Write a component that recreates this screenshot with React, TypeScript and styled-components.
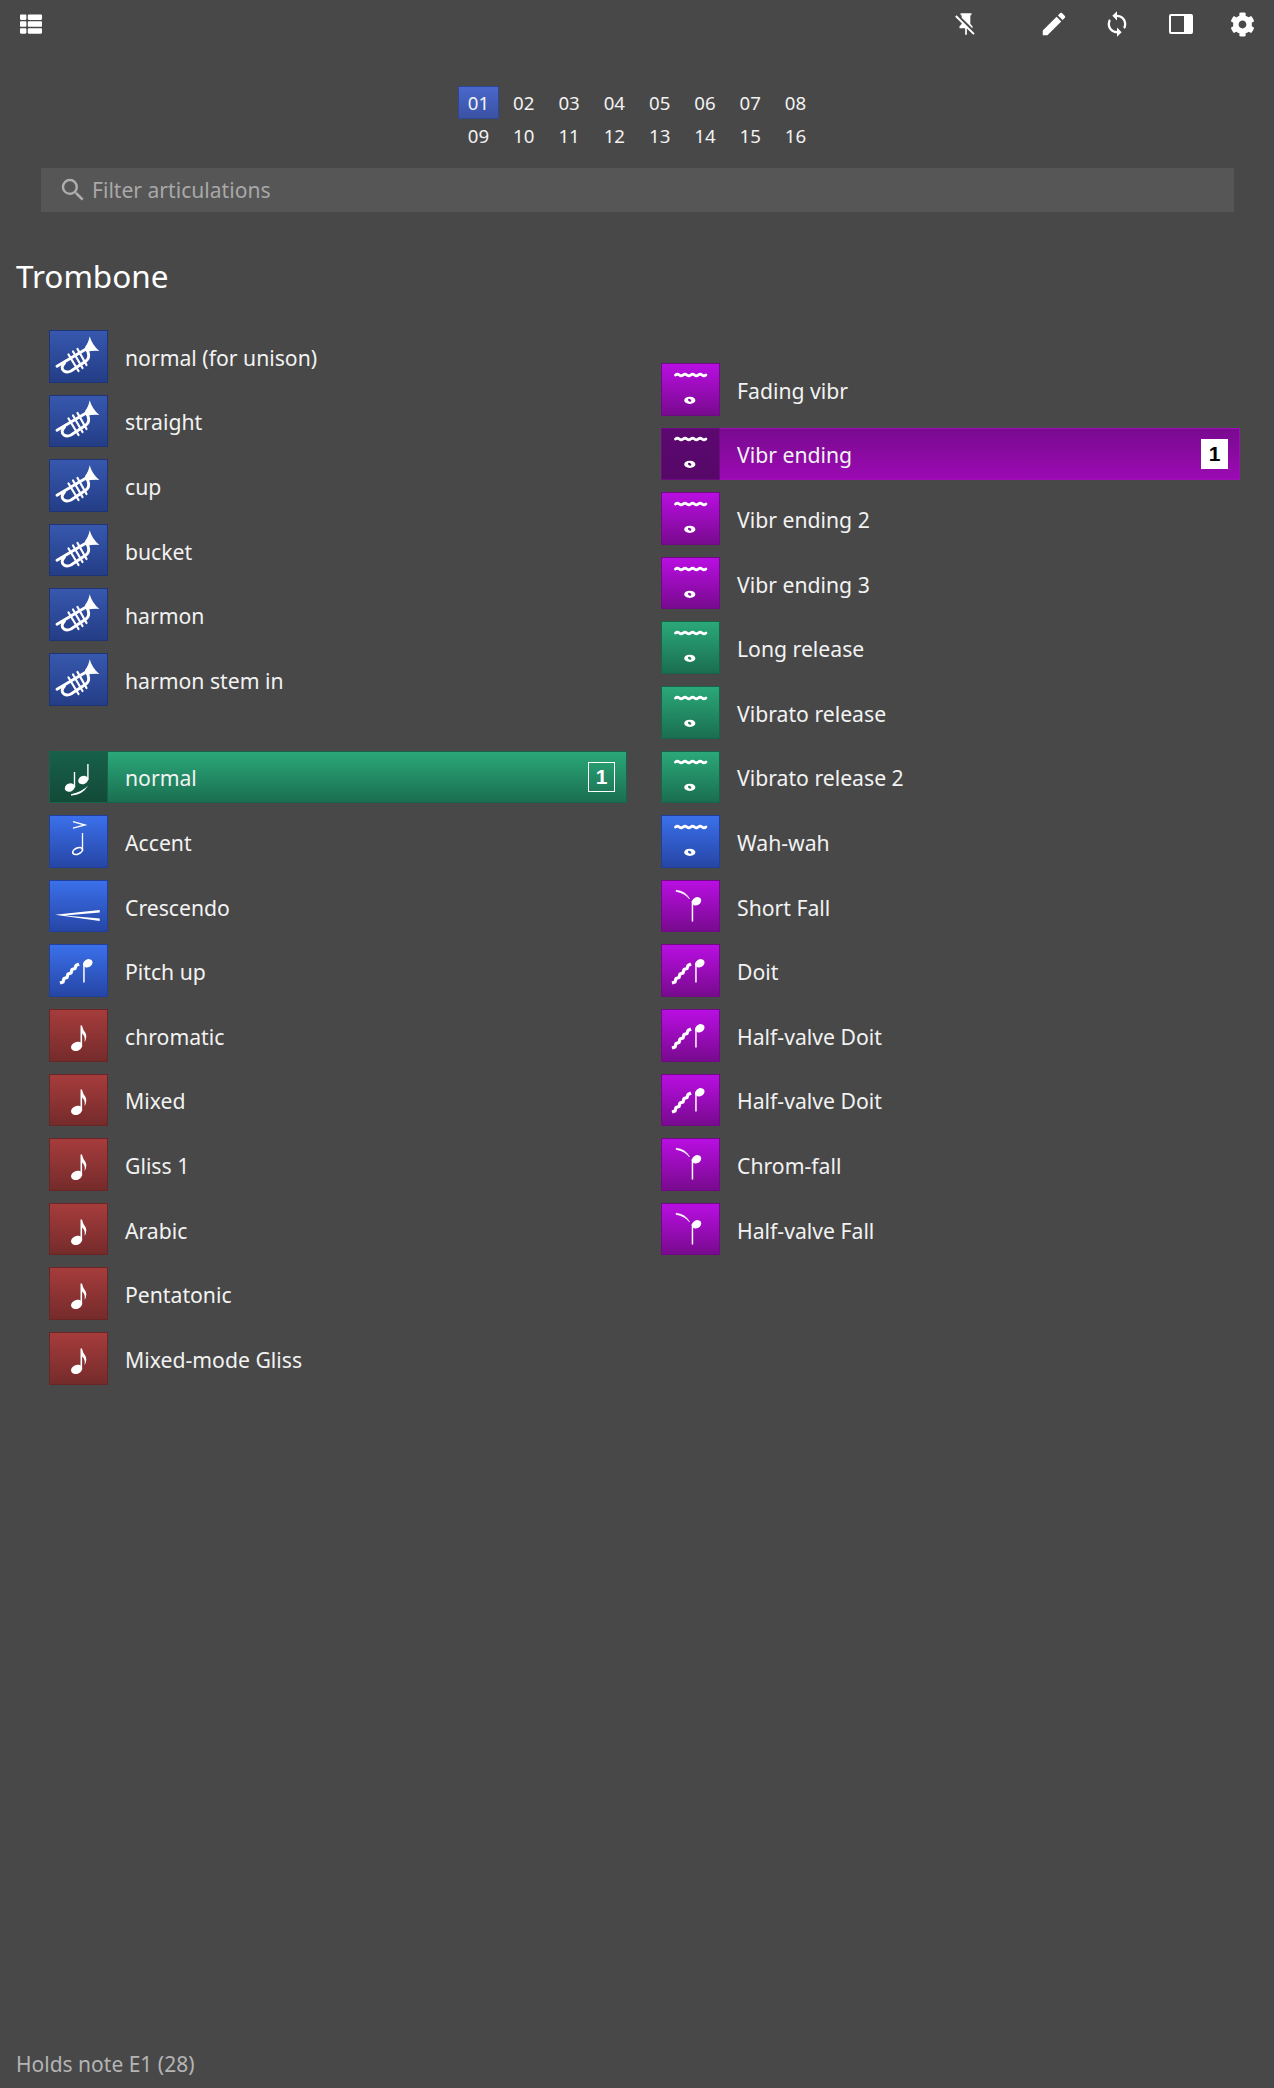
import styled, { createGlobalStyle } from 'styled-components';
import { FaCog, FaThList } from 'react-icons/fa';
import { MdEdit, MdSearch, MdSync } from 'react-icons/md';

type Tone = 'navy' | 'blue' | 'red' | 'purple' | 'green';
type Glyph = 'trumpet' | 'slur' | 'accent' | 'cresc' | 'doit' | 'eighth' | 'vibrato' | 'fall';

interface Articulation {
  label: string;
  tone: Tone;
  glyph: Glyph;
  slot?: 'outline' | 'solid';
}

const tones: Record<Tone, { top: string; bottom: string; border: string; dark: string; darkEnd: string }> = {
  navy: { top: '#3758ae', bottom: '#243d86', border: '#1f3474', dark: '#1f3474', darkEnd: '#1a2c60' },
  blue: { top: '#3b70ea', bottom: '#2646a6', border: '#21409c', dark: '#1f3c90', darkEnd: '#1a3278' },
  red: { top: '#a63c3c', bottom: '#752b2b', border: '#682626', dark: '#682626', darkEnd: '#522020' },
  purple: { top: '#b90ee2', bottom: '#780a8e', border: '#6e0a84', dark: '#5c0870', darkEnd: '#560868' },
  green: { top: '#2ba87a', bottom: '#1a6e50', border: '#186448', dark: '#17604a', darkEnd: '#134a38' },
};

const firstGroup: Articulation[] = [
  { label: 'normal (for unison)', tone: 'navy', glyph: 'trumpet' },
  { label: 'straight', tone: 'navy', glyph: 'trumpet' },
  { label: 'cup', tone: 'navy', glyph: 'trumpet' },
  { label: 'bucket', tone: 'navy', glyph: 'trumpet' },
  { label: 'harmon', tone: 'navy', glyph: 'trumpet' },
  { label: 'harmon stem in', tone: 'navy', glyph: 'trumpet' },
];

const secondGroup: Articulation[] = [
  { label: 'normal', tone: 'green', glyph: 'slur', slot: 'outline' },
  { label: 'Accent', tone: 'blue', glyph: 'accent' },
  { label: 'Crescendo', tone: 'blue', glyph: 'cresc' },
  { label: 'Pitch up', tone: 'blue', glyph: 'doit' },
  { label: 'chromatic', tone: 'red', glyph: 'eighth' },
  { label: 'Mixed', tone: 'red', glyph: 'eighth' },
  { label: 'Gliss 1', tone: 'red', glyph: 'eighth' },
  { label: 'Arabic', tone: 'red', glyph: 'eighth' },
  { label: 'Pentatonic', tone: 'red', glyph: 'eighth' },
  { label: 'Mixed-mode Gliss', tone: 'red', glyph: 'eighth' },
];

const thirdGroup: Articulation[] = [
  { label: 'Fading vibr', tone: 'purple', glyph: 'vibrato' },
  { label: 'Vibr ending', tone: 'purple', glyph: 'vibrato', slot: 'solid' },
  { label: 'Vibr ending 2', tone: 'purple', glyph: 'vibrato' },
  { label: 'Vibr ending 3', tone: 'purple', glyph: 'vibrato' },
  { label: 'Long release', tone: 'green', glyph: 'vibrato' },
  { label: 'Vibrato release', tone: 'green', glyph: 'vibrato' },
  { label: 'Vibrato release 2', tone: 'green', glyph: 'vibrato' },
  { label: 'Wah-wah', tone: 'blue', glyph: 'vibrato' },
  { label: 'Short Fall', tone: 'purple', glyph: 'fall' },
  { label: 'Doit', tone: 'purple', glyph: 'doit' },
  { label: 'Half-valve Doit', tone: 'purple', glyph: 'doit' },
  { label: 'Half-valve Doit', tone: 'purple', glyph: 'doit' },
  { label: 'Chrom-fall', tone: 'purple', glyph: 'fall' },
  { label: 'Half-valve Fall', tone: 'purple', glyph: 'fall' },
];

const banks = Array.from({ length: 16 }, (_, i) => String(i + 1).padStart(2, '0'));

function GlyphArt({ name }: { name: Glyph }) {
  switch (name) {
    case 'trumpet':
      return (
        <>
          <path d="M40.7 6.3 Q43 15 50.3 20.9 Q43 20.5 37 22 L36 17 Q39.5 13 40.7 6.3 Z" fill="#fff" />
          <g fill="none" stroke="#fff" strokeWidth="2.9" strokeLinecap="round">
            <path d="M8 36.3 L38 18.5" />
            <path d="M15.5 33 Q11 38 15 41 Q18 43 22 41 L37 31 Q41 28 39 22" />
          </g>
          <g fill="none" stroke="#fff" strokeWidth="2.2" strokeLinecap="round">
            <path d="M19.5 24.5 L29.5 41" />
            <path d="M24 21.5 L33.5 38" />
            <path d="M28.5 19 L37.5 35" />
          </g>
        </>
      );
    case 'slur':
      return (
        <g fill="#fff">
          <ellipse cx="20.8" cy="37.5" rx="5.2" ry="4" transform="rotate(-25 20.8 37.5)" />
          <path d="M24.8 22 h1.4 v15.5 h-1.4z" />
          <ellipse cx="34.2" cy="30" rx="5.2" ry="4" transform="rotate(-25 34.2 30)" />
          <path d="M38.2 14 h1.4 v16 h-1.4z" />
          <path d="M22 45.4 Q33 45.7 39.2 35.5 Q33 42 22 44.2z" />
        </g>
      );
    case 'accent':
      return (
        <g fill="none" stroke="#fff" strokeWidth="1.3">
          <path d="M24 6.7 L36 10 L24 13.2" />
          <path d="M33.5 18 V35.5" />
          <ellipse cx="28.6" cy="36" rx="5.2" ry="3" transform="rotate(-25 28.6 36)" strokeWidth="1.7" />
        </g>
      );
    case 'cresc':
      return <path d="M6 34.8 L50.7 30 V32.4 L16 35.6 L50.7 38.6 V41 Z" fill="#fff" />;
    case 'doit':
      return (
        <g>
          <path
            d="M11 39 l3 -1 l1 -3.5 l3 -1 l1 -3.5 l3 -1 l1 -3.5 l3 -1 l1 -3 l3 -1.5"
            fill="none"
            stroke="#fff"
            strokeWidth="3.2"
            strokeLinejoin="round"
          />
          <path d="M34.2 19 h1.5 v19.5 h-1.5z" fill="#fff" />
          <ellipse cx="38.8" cy="19.3" rx="5" ry="3.9" transform="rotate(-30 38.8 19.3)" fill="#fff" />
        </g>
      );
    case 'eighth':
      return (
        <g fill="#fff">
          <ellipse cx="27.6" cy="37.4" rx="5.8" ry="4.4" transform="rotate(-25 27.6 37.4)" />
          <path d="M31.5 16.5 h1.6 v21 h-1.6z" />
          <path d="M33 17 Q34 21 36.5 24 Q38.5 28 35.6 33 Q36.6 27 33 24.5z" />
        </g>
      );
    case 'vibrato':
      return (
        <g fill="#fff">
          <path
            d="M14.5 12 q1.9 -1.6 3.8 0 t3.8 0 t3.8 0 t3.8 0 t3.8 0 t3.8 0 t3.8 0 t3.8 0"
            fill="none"
            stroke="#fff"
            strokeWidth="2.8"
            strokeLinecap="round"
          />
          <path
            fillRule="evenodd"
            d="M28.8 33.7 c3.4 0 5.6 1.5 5.6 3.6 s-2.2 3.6 -5.6 3.6 s-5.6 -1.5 -5.6 -3.6 s2.2 -3.6 5.6 -3.6z M27.4 36 c-.6 .3 -.5 1.2 .2 2 c.7 .8 1.7 1 2.3 .6 c.6 -.4 .5 -1.2 -.2 -2 c-.7 -.7 -1.7 -.9 -2.3 -.6z"
          />
        </g>
      );
    default:
      return (
        <g>
          <path d="M15 10.2 Q24.5 11 28.6 19 Q24 13 15 11.4z" fill="#fff" stroke="#fff" strokeWidth=".5" />
          <path d="M30.7 21 h1.5 v20.5 h-1.5z" fill="#fff" />
          <ellipse cx="35.5" cy="21.3" rx="5" ry="3.9" transform="rotate(-30 35.5 21.3)" fill="#fff" />
        </g>
      );
  }
}

function ArticulationRow({ item }: { item: Articulation }) {
  return (
    <Row $tone={item.tone} $slot={item.slot}>
      <IconBox $tone={item.tone} $active={!!item.slot}>
        <svg width="59" height="53" viewBox="0 0 59 53">
          <GlyphArt name={item.glyph} />
        </svg>
      </IconBox>
      <RowLabel>{item.label}</RowLabel>
      {item.slot && <SlotBadge $solid={item.slot === 'solid'}>1</SlotBadge>}
    </Row>
  );
}

export default function App() {
  return (
    <>
      <GlobalStyle />
      <Page>
        <Toolbar>
          <MenuButton>
            <FaThList size={22} />
          </MenuButton>
          <ToolGroup>
            <PinButton>
              <svg width="26" height="26" viewBox="0 0 24 24" fill="#fff">
                <path d="M2 5.27 3.28 4 20 20.72 18.73 22l-5.93-5.93V22h-1.6v-6H6v-2l2-2v-.73l-6-6M16 12l2 2v2h-.18L8 6.18V4H7V2h10v2h-1v8Z" />
              </svg>
            </PinButton>
            <ToolButton>
              <MdEdit size={30} />
            </ToolButton>
            <ToolButton>
              <MdSync size={28} />
            </ToolButton>
            <ToolButton>
              <PanelIcon />
            </ToolButton>
            <ToolButton>
              <FaCog size={25} />
            </ToolButton>
          </ToolGroup>
        </Toolbar>

        <BankGrid>
          {banks.map((bank) => (
            <BankCell key={bank} $active={bank === '01'}>
              {bank}
            </BankCell>
          ))}
        </BankGrid>

        <FilterBar>
          <MdSearch size={30} />
          <FilterText>Filter articulations</FilterText>
        </FilterBar>

        <Title>Trombone</Title>

        <Columns>
          <Column>
            <RowGroup>
              {firstGroup.map((item) => (
                <ArticulationRow key={item.label} item={item} />
              ))}
            </RowGroup>
            <RowGroup>
              {secondGroup.map((item) => (
                <ArticulationRow key={item.label} item={item} />
              ))}
            </RowGroup>
          </Column>
          <RightColumn>
            <RowGroup>
              {thirdGroup.map((item, i) => (
                <ArticulationRow key={i} item={item} />
              ))}
            </RowGroup>
          </RightColumn>
        </Columns>

        <Footer>Holds note E1 (28)</Footer>
      </Page>
    </>
  );
}

const GlobalStyle = createGlobalStyle`
  html, body {
    margin: 0;
    padding: 0;
    background: #484848;
  }
  body {
    font-family: "Noto Sans", "Open Sans", sans-serif;
    color: #fff;
  }
`;

const Page = styled.div`
  display: flex;
  flex-direction: column;
  height: 2088px;
  overflow: hidden;
`;

const Toolbar = styled.header`
  display: flex;
  justify-content: space-between;
  align-items: center;
  height: 48px;
  padding-left: 20px;
  margin-bottom: 38px;
`;

const MenuButton = styled.div`
  display: flex;
  align-items: center;
  color: #fff;
`;

const ToolGroup = styled.div`
  display: flex;
  align-items: center;
`;

const ToolButton = styled.div`
  display: flex;
  align-items: center;
  justify-content: center;
  width: 63px;
  height: 48px;
  color: #fff;
`;

const PinButton = styled(ToolButton)`
  margin-right: 25px;
`;

const PanelShape = styled.span`
  display: block;
  box-sizing: border-box;
  width: 24px;
  height: 20px;
  margin-left: 2px;
  border: 2px solid #fff;
  border-right-width: 9px;
  border-radius: 2px;
`;

function PanelIcon() {
  return <PanelShape />;
}

const BankGrid = styled.div`
  align-self: center;
  display: grid;
  grid-template-columns: repeat(8, 41px);
  grid-auto-rows: 33px;
  column-gap: 4.3px;
`;

const BankCell = styled.div<{ $active: boolean }>`
  box-sizing: border-box;
  display: flex;
  align-items: center;
  justify-content: center;
  font-size: 18.67px;
  color: #f2f2f2;
  ${({ $active }) =>
    $active &&
    `
    background: linear-gradient(#4a68cc, #3a52a4);
    border: 1px solid #2f4790;
  `}
`;

const FilterBar = styled.div`
  display: flex;
  align-items: center;
  gap: 4.5px;
  height: 44px;
  margin: 16px 40px 0 40.5px;
  padding-left: 17px;
  background: #565656;
  color: #aeaeae;
`;

const FilterText = styled.span`
  margin-top: -1px;
  font-size: 21.1px;
  color: #a8a8a8;
`;

const Title = styled.h1`
  margin: 41px 0 0 16px;
  height: 46px;
  font-size: 31.5px;
  line-height: 46px;
  font-weight: 400;
  color: #fff;
`;

const Columns = styled.div`
  display: grid;
  grid-template-columns: 578px 579px;
  column-gap: 34px;
  margin: 31px 0 0 49px;
  flex: 1;
`;

const Column = styled.div`
  display: flex;
  flex-direction: column;
  gap: 45px;
`;

const RightColumn = styled(Column)`
  padding-top: 33px;
`;

const RowGroup = styled.div`
  display: flex;
  flex-direction: column;
  gap: 12px;
`;

const Row = styled.div<{ $tone: Tone; $slot?: string }>`
  display: flex;
  align-items: center;
  height: 52.6px;
  ${({ $tone, $slot }) =>
    $slot === 'outline' &&
    `background: linear-gradient(${tones[$tone].top}, ${tones[$tone].bottom});
     box-shadow: inset 0 0 0 1px ${tones[$tone].border};`}
  ${({ $tone, $slot }) =>
    $slot === 'solid' &&
    `background: linear-gradient(${tones[$tone].bottom}, #9c0ab4);
     box-shadow: inset 0 0 0 1px #a00cbc;`}
`;

const IconBox = styled.div<{ $tone: Tone; $active: boolean }>`
  box-sizing: border-box;
  flex: none;
  display: flex;
  align-items: center;
  justify-content: center;
  width: 59px;
  height: 100%;
  border: 1px solid ${({ $tone }) => tones[$tone].border};
  background: ${({ $tone, $active }) =>
    $active
      ? `linear-gradient(${tones[$tone].dark}, ${tones[$tone].darkEnd})`
      : `linear-gradient(${tones[$tone].top}, ${tones[$tone].bottom})`};
  & > svg {
    flex: none;
    margin: -1px;
  }
`;

const RowLabel = styled.span`
  flex: 1;
  padding: 2px 0 0 17px;
  font-size: 21.2px;
  color: #f2f2f2;
`;

const SlotBadge = styled.span<{ $solid: boolean }>`
  box-sizing: border-box;
  display: flex;
  align-items: center;
  justify-content: center;
  width: 27px;
  height: 30px;
  margin-right: 12px;
  font-family: "Liberation Sans", Arial, sans-serif;
  font-size: 21px;
  font-weight: 700;
  color: ${({ $solid }) => ($solid ? '#000' : '#fff')};
  background: ${({ $solid }) => ($solid ? '#fff' : 'transparent')};
  border: ${({ $solid }) => ($solid ? 'none' : '1px solid #fff')};
`;

const Footer = styled.footer`
  height: 37px;
  padding-left: 16px;
  font-size: 21px;
  line-height: 26px;
  color: #b4b4b4;
`;
